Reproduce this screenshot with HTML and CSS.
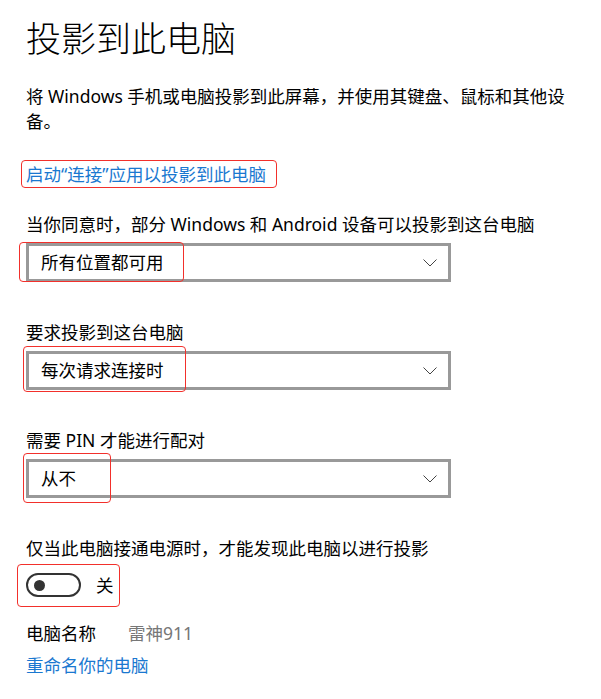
FILE: index.html
```html
<!DOCTYPE html>
<html lang="zh-CN">
<head>
  <meta charset="UTF-8" />
  <meta name="viewport" content="width=device-width, initial-scale=1.0"/>
  <title>投影到此电脑</title>
  <link rel="stylesheet" href="styles.css">
</head>
<body>
  <div class="page">
    <h1 class="title">投影到此电脑</h1>
    <p class="desc">将 Windows 手机或电脑投影到此屏幕，并使用其键盘、鼠标和其他设备。</p>

    <div class="link-row">
      <a class="link" href="#">启动“连接”应用以投影到此电脑</a>
      <span class="mark mark-link"></span>
    </div>

    <div class="field">
      <div class="label">当你同意时，部分 Windows 和 Android 设备可以投影到这台电脑</div>
      <div class="control">
        <div class="select">
          <span>所有位置都可用</span>
          <svg class="chevron" width="14" height="8" viewBox="0 0 14 8"><polyline points="0.5,0.5 7,7 13.5,0.5" fill="none" stroke="#444" stroke-width="1"/></svg>
        </div>
        <span class="mark mark-1"></span>
      </div>
    </div>

    <div class="field">
      <div class="label">要求投影到这台电脑</div>
      <div class="control">
        <div class="select">
          <span>每次请求连接时</span>
          <svg class="chevron" width="14" height="8" viewBox="0 0 14 8"><polyline points="0.5,0.5 7,7 13.5,0.5" fill="none" stroke="#444" stroke-width="1"/></svg>
        </div>
        <span class="mark mark-2"></span>
      </div>
    </div>

    <div class="field">
      <div class="label">需要 PIN 才能进行配对</div>
      <div class="control">
        <div class="select">
          <span>从不</span>
          <svg class="chevron" width="14" height="8" viewBox="0 0 14 8"><polyline points="0.5,0.5 7,7 13.5,0.5" fill="none" stroke="#444" stroke-width="1"/></svg>
        </div>
        <span class="mark mark-3"></span>
      </div>
    </div>

    <div class="field">
      <div class="label">仅当此电脑接通电源时，才能发现此电脑以进行投影</div>
      <div class="toggle-row">
        <span class="toggle"><span class="knob"></span></span>
        <span class="toggle-text">关</span>
        <span class="mark mark-toggle"></span>
      </div>
    </div>

    <div class="name-row">
      <span>电脑名称</span>
      <span class="name-value">雷神911</span>
    </div>
    <a class="link rename" href="#">重命名你的电脑</a>
  </div>
</body>
</html>
```

FILE: styles.css
```css
body {
  margin: 0;
  background: #fff;
  color: #000;
  font-family: "Noto Sans", "Noto Sans CJK SC", sans-serif;
  font-size: 17.5px;
  line-height: 25px;
}

.page {
  padding: 16px 0 0 26px;
}

.title {
  margin: 0;
  font-size: 35px;
  line-height: 46px;
  font-weight: 300;
}

.desc {
  margin: 22px 0 0;
  max-width: 545px;
}

.link-row {
  position: relative;
  margin-top: 28px;
  height: 25px;
}

.link {
  color: #1a78d0;
  text-decoration: none;
}

.field {
  margin-top: 25px;
}

.field + .field {
  margin-top: 38px;
}

.control {
  position: relative;
  margin-top: 6px;
  width: 425px;
}

.select {
  box-sizing: border-box;
  height: 39px;
  border: 3px solid #999;
  background: #fff;
  display: flex;
  align-items: center;
  justify-content: space-between;
  padding: 0 11px 0 12px;
}

.chevron {
  display: block;
}

.mark {
  position: absolute;
  box-sizing: border-box;
  border: 1.5px solid #f2302b;
  border-radius: 4px;
  pointer-events: none;
}

.mark-link { left: -5px; top: -2px; width: 256px; height: 28px; }
.mark-1 { left: -7px; top: -1px; width: 165px; height: 40px; }
.mark-2 { left: -3px; top: -5px; width: 163px; height: 46px; }
.mark-3 { left: -3px; top: -6px; width: 88px; height: 50px; }
.mark-toggle { left: -9px; top: -9px; width: 103px; height: 43px; }

.toggle-row {
  position: relative;
  margin-top: 12px;
  display: flex;
  align-items: center;
  gap: 15px;
  height: 24px;
}

.toggle {
  box-sizing: border-box;
  width: 55px;
  height: 24px;
  border: 2.5px solid #333;
  border-radius: 12px;
  display: flex;
  align-items: center;
  padding-left: 5.5px;
}

.knob {
  width: 11px;
  height: 11px;
  border-radius: 50%;
  background: #333;
}

.name-row {
  margin-top: 24px;
  display: flex;
  gap: 32px;
}

.name-value {
  color: #777;
}

.rename {
  display: block;
  margin-top: 7px;
}
```
